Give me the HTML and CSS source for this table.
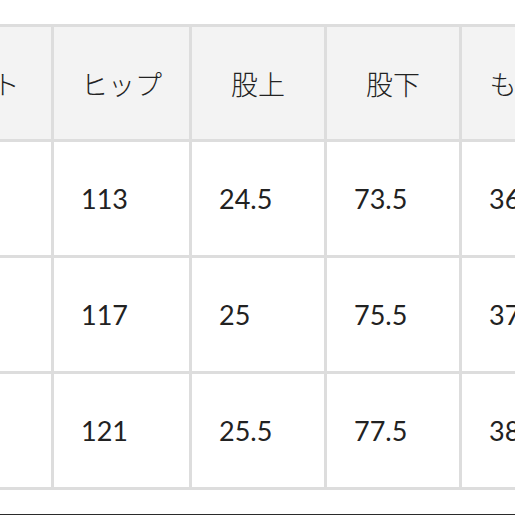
FILE: index.html
```html
<!DOCTYPE html>
<html lang="ja">
<head>
<meta charset="utf-8">
<link rel="stylesheet" href="styles.css">
</head>
<body>
<div class="viewport">
  <table class="size-table">
    <colgroup>
      <col class="c-waist">
      <col class="c-hip">
      <col class="c-rise">
      <col class="c-inseam">
      <col class="c-thigh">
    </colgroup>
    <thead>
      <tr>
        <th>ウエスト</th>
        <th>ヒップ</th>
        <th>股上</th>
        <th>股下</th>
        <th>もも周り</th>
      </tr>
    </thead>
    <tbody>
      <tr><td>82</td><td>113</td><td>24.5</td><td>73.5</td><td>36.5</td></tr>
      <tr><td>86</td><td>117</td><td>25</td><td>75.5</td><td>37.5</td></tr>
      <tr><td>90</td><td>121</td><td>25.5</td><td>77.5</td><td>38.5</td></tr>
    </tbody>
  </table>
  <div class="divider"></div>
</div>
</body>
</html>
```

FILE: styles.css
```css
html, body {
  margin: 0;
  padding: 0;
  background: #ffffff;
}

.viewport {
  width: 515px;
  height: 515px;
  overflow: hidden;
  padding-top: 24px;
  box-sizing: border-box;
}

.size-table {
  border-collapse: collapse;
  table-layout: fixed;
  width: 748px;
  margin-left: -123px;
  font-family: Lato, "Noto Sans CJK JP", sans-serif;
  font-size: 27px;
  color: #222222;
}

.c-waist { width: 174px; }
.c-hip { width: 138px; }
.c-rise { width: 135px; }
.c-inseam { width: 135px; }
.c-thigh { width: 166px; }

.size-table th,
.size-table td {
  border: 3px solid #dddddd;
  vertical-align: middle;
  white-space: nowrap;
  overflow: hidden;
}

.size-table th {
  background: #f3f3f3;
  font-weight: 300;
  text-align: center;
  height: 112px;
  padding: 0;
}

.size-table td {
  background: #ffffff;
  text-align: left;
  height: 113px;
  padding: 0 0 0 27px;
}

.divider {
  margin-top: 24px;
  height: 3px;
  background: #2b2b2b;
}
```
